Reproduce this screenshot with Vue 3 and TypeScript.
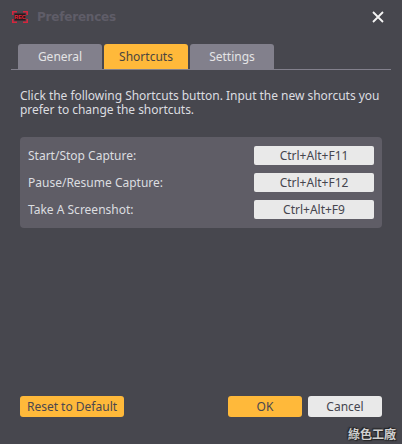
<script setup lang="ts">
const tabs = ['General', 'Shortcuts', 'Settings']
const rows = [
  { label: 'Start/Stop Capture:', keys: 'Ctrl+Alt+F11' },
  { label: 'Pause/Resume Capture:', keys: 'Ctrl+Alt+F12' },
  { label: 'Take A Screenshot:', keys: 'Ctrl+Alt+F9' },
]
</script>

<template>
  <div class="window">
    <header class="titlebar">
      <svg class="logo" viewBox="0 0 16 12" width="16" height="12">
        <path d="M0.8 4V0.8H5M11 0.8H15.2V4M15.2 8V11.2H11M5 11.2H0.8V8" fill="none" stroke="#d4263e" stroke-width="1.6" />
        <rect x="2.5" y="2.5" width="11" height="7" fill="#2a181c" />
        <text x="8" y="8.2" text-anchor="middle" class="rec">REC</text>
      </svg>
      <span class="title">Preferences</span>
      <svg class="close" viewBox="0 0 12 12" width="12" height="12">
        <path d="M1 1L11 11M11 1L1 11" stroke="#f4f4f4" stroke-width="1.8" fill="none" />
      </svg>
    </header>

    <nav class="tabs">
      <div v-for="tab in tabs" :key="tab" class="tab" :class="{ active: tab === 'Shortcuts' }">{{ tab }}</div>
    </nav>

    <div class="intro">
      <div>Click the following Shortcuts button. Input the new shorcuts you</div>
      <div>prefer to change the shortcuts.</div>
    </div>

    <section class="panel">
      <div v-for="row in rows" :key="row.label" class="row">
        <span>{{ row.label }}</span>
        <button class="key">{{ row.keys }}</button>
      </div>
    </section>

    <footer class="footer">
      <button class="btn primary reset">Reset to Default</button>
      <div class="actions">
        <button class="btn primary ok">OK</button>
        <button class="btn light cancel">Cancel</button>
      </div>
    </footer>

    <div class="watermark">綠色工廠</div>
  </div>
</template>

<style>
html, body {
  margin: 0;
  background: #47474e;
}
</style>

<style scoped>
.window {
  position: relative;
  box-sizing: border-box;
  width: 402px;
  height: 444px;
  display: flex;
  flex-direction: column;
  background: #47474e;
  color: #dcdde0;
  font-family: "Noto Sans", "DejaVu Sans", sans-serif;
  font-size: 12px;
  overflow: hidden;
}
.titlebar {
  display: flex;
  align-items: center;
  height: 34px;
  padding: 0 18px 0 12px;
  box-sizing: border-box;
}
.rec {
  font-family: "Liberation Sans", sans-serif;
  font-size: 5.5px;
  font-weight: 700;
  fill: #e5263a;
}
.title {
  margin-left: 9px;
  font-family: "DejaVu Sans", sans-serif;
  font-size: 12px;
  font-weight: 700;
  letter-spacing: -0.2px;
  color: #5f5d68;
}
.close {
  margin-left: auto;
}
.tabs {
  display: flex;
  gap: 2px;
  height: 25px;
  margin: 10px 11px 0;
  padding-left: 7px;
  border-bottom: 1px solid #82808c;
}
.tab {
  width: 84px;
  display: flex;
  align-items: center;
  justify-content: center;
  background: #82808c;
  border-radius: 3px 3px 0 0;
  color: #e4e4e6;
}
.tab.active {
  background: #ffb93a;
  color: #4a4540;
}
.intro {
  margin: 19px 20px 0;
  line-height: 14px;
  letter-spacing: -0.03px;
  white-space: nowrap;
}
.panel {
  display: flex;
  flex-direction: column;
  gap: 8px;
  width: 362px;
  height: 91px;
  box-sizing: border-box;
  margin: 20px 0 0 20px;
  padding: 9px 8px 0;
  background: #5f5d66;
  border-radius: 4px;
}
.row {
  display: flex;
  align-items: center;
  justify-content: space-between;
  height: 19px;
}
.key {
  width: 120px;
  height: 19px;
  padding: 0;
  border: 0;
  border-radius: 2px;
  background: #e9e9e9;
  color: #45454e;
  font: inherit;
}
.footer {
  display: flex;
  justify-content: space-between;
  margin: auto 20px 27px;
}
.actions {
  display: flex;
  gap: 6px;
}
.btn {
  height: 21px;
  padding: 0;
  border: 0;
  border-radius: 3px;
  font: inherit;
  color: #4a4750;
}
.primary {
  background: #ffb93a;
}
.light {
  background: #e9e9e9;
  color: #45454e;
}
.reset {
  width: 104px;
}
.ok, .cancel {
  width: 74px;
}
.watermark {
  position: absolute;
  right: 6px;
  bottom: 2px;
  font-family: "Noto Sans CJK TC", sans-serif;
  font-size: 12px;
  font-weight: 700;
  color: #d0d0d0;
  text-shadow: 0 0 2px #222, 1px 1px 1px #222, -1px -1px 1px #222;
}
</style>
